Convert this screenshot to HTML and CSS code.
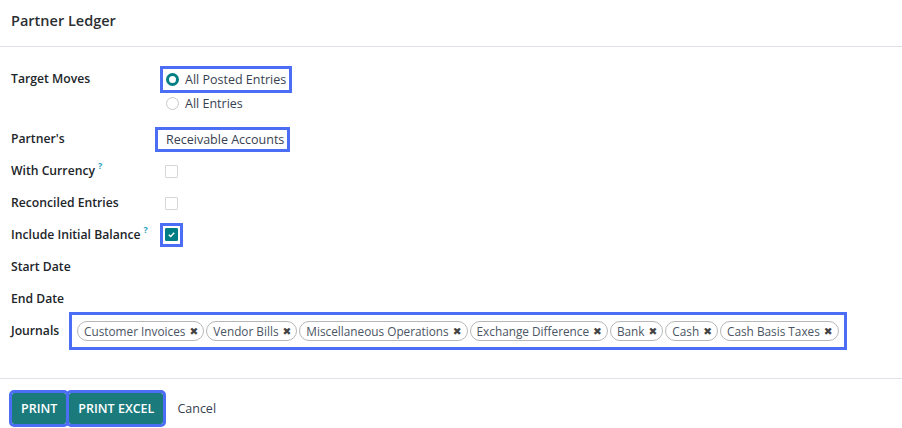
FILE: index.html
```html
<!DOCTYPE html>
<html>
<head>
<meta charset="utf-8">
<link rel="stylesheet" href="styles.css">
</head>
<body>
<div class="modal">
  <header class="head">Partner Ledger</header>
  <main class="body">
    <div class="row row-moves">
      <div class="label">Target Moves</div>
      <div class="value moves">
        <div class="radio-line hl"><span class="radio on"></span>All Posted Entries</div>
        <div class="radio-line"><span class="radio"></span>All Entries</div>
      </div>
    </div>
    <div class="row">
      <div class="label">Partner's</div>
      <div class="value"><span class="select hl">Receivable Accounts</span></div>
    </div>
    <div class="row">
      <div class="label">With Currency<sup class="q">?</sup></div>
      <div class="value"><span class="check"></span></div>
    </div>
    <div class="row">
      <div class="label">Reconciled Entries</div>
      <div class="value"><span class="check"></span></div>
    </div>
    <div class="row">
      <div class="label">Include Initial Balance<sup class="q">?</sup></div>
      <div class="value"><span class="check-wrap hl"><span class="check on"><svg viewBox="0 0 10 10" width="9" height="9"><path d="M2 5.2 L4.1 7.2 L8 3" fill="none" stroke="#fff" stroke-width="1.6"/></svg></span></span></div>
    </div>
    <div class="row">
      <div class="label">Start Date</div>
      <div class="value"></div>
    </div>
    <div class="row">
      <div class="label">End Date</div>
      <div class="value"></div>
    </div>
    <div class="row-journals">
      <div class="label jl">Journals</div>
      <div class="tags hl">
        <span class="tag">Customer Invoices <span class="x">✖</span></span>
        <span class="tag">Vendor Bills <span class="x">✖</span></span>
        <span class="tag">Miscellaneous Operations <span class="x">✖</span></span>
        <span class="tag">Exchange Difference <span class="x">✖</span></span>
        <span class="tag">Bank <span class="x">✖</span></span>
        <span class="tag">Cash <span class="x">✖</span></span>
        <span class="tag">Cash Basis Taxes <span class="x">✖</span></span>
      </div>
    </div>
  </main>
  <footer class="foot">
    <button class="btn primary hl">PRINT</button>
    <button class="btn primary hl">PRINT EXCEL</button>
    <button class="btn link">Cancel</button>
  </footer>
</div>
</body>
</html>
```
FILE: styles.css
```css
* { box-sizing: border-box; }
html, body { margin: 0; padding: 0; background: #fff; }
body {
  font-family: "Open Sans", "Noto Sans", sans-serif;
  font-size: 12.5px;
  color: #374151;
  width: 902px;
  height: 428px;
  overflow: hidden;
}
.hl { outline: 3px solid #4c6ef5; outline-offset: 0; }
.head {
  height: 47px;
  padding-left: 11px;
  display: flex;
  align-items: center;
  font-size: 14.5px;
  font-weight: 600;
  color: #2b2f33;
  border-bottom: 1px solid #dee2e6;
  padding-bottom: 5px;
}
.body {
  padding: 20px 0 31px 11px;
}
.row {
  display: grid;
  grid-template-columns: 152px 1fr;
  height: 32px;
  align-items: center;
}
.row-moves {
  height: auto;
  align-items: start;
  padding-bottom: 6px;
}
.label {
  font-weight: 600;
  font-size: 12.2px;
  color: #212529;
  line-height: 24px;
  white-space: nowrap;
}
.q {
  color: #2b9fc4;
  font-size: 9px;
  font-weight: 700;
  margin-left: 3px;
  vertical-align: 6px;
  line-height: 0;
}
.value { display: flex; flex-direction: column; align-items: flex-start; }
.moves { padding-top: 2px; }
.radio-line {
  display: flex;
  align-items: center;
  height: 21px;
  padding: 0 3px 0 3px;
  margin-bottom: 3px;
  color: #374151;
}
.radio {
  width: 13px;
  height: 13px;
  border-radius: 50%;
  border: 1px solid #c7c9cc;
  margin-right: 6px;
  background: #fff;
}
.radio.on {
  border: 3.5px solid #017e84;
  background: #fff;
}
.select {
  display: inline-block;
  margin-left: -5px;
  padding: 0 3px 0 8px;
  line-height: 19px;
  color: #374151;
}
.check {
  display: inline-flex;
  align-items: center;
  justify-content: center;
  width: 13px;
  height: 13px;
  border: 1px solid #d5d7da;
  border-radius: 1px;
  margin-left: 2px;
  background: #fff;
}
.check.on { background: #017e84; border-color: #017e84; margin: 0; }
.check-wrap {
  display: inline-flex;
  padding: 2px 2px 3px 2px;
  margin-left: 0;
  background: #fff;
}
.row-journals {
  display: flex;
  align-items: center;
  height: 32px;
  margin-top: 0;
}
.jl { width: 61px; }
.tags {
  display: flex;
  align-items: center;
  height: 32px;
  padding: 0 3px 0 5px;
  gap: 2px;
  width: 772px;
}
.tag {
  display: inline-flex;
  align-items: center;
  height: 20px;
  padding: 0 5px 0 6px;
  border: 1px solid #b7b7b7;
  border-radius: 10px;
  font-size: 11.8px;
  color: #4b5563;
  white-space: nowrap;
}
.x {
  font-family: "DejaVu Sans", sans-serif;
  font-size: 10.5px;
  margin-left: 4px;
  color: #444;
}
.foot {
  border-top: 1px solid #dee2e6;
  padding: 14px 0 0 12px;
  display: flex;
  align-items: center;
  gap: 3px;
}
.btn {
  font-family: inherit;
  font-size: 12.5px;
  font-weight: 600;
  height: 31px;
  border: none;
  padding: 0 9px;
  border-radius: 2px;
  cursor: pointer;
}
.primary { background: #1a7a7c; color: #fff; }
.link { background: transparent; color: #374151; padding: 0 11px; font-weight: 400; }
```
